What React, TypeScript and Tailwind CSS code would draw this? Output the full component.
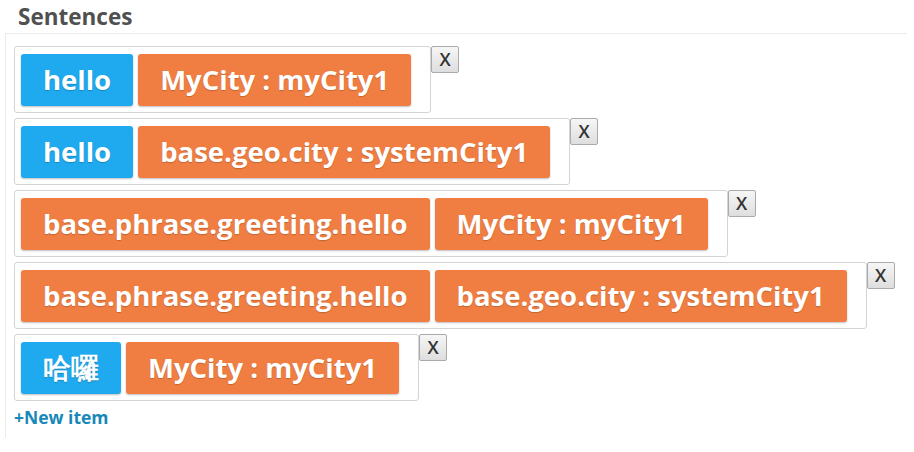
import React from 'react';

type Part = { text: string; kind: 'word' | 'slot' };

const sentences: Part[][] = [
  [
    { text: 'hello', kind: 'word' },
    { text: 'MyCity : myCity1', kind: 'slot' },
  ],
  [
    { text: 'hello', kind: 'word' },
    { text: 'base.geo.city : systemCity1', kind: 'slot' },
  ],
  [
    { text: 'base.phrase.greeting.hello', kind: 'slot' },
    { text: 'MyCity : myCity1', kind: 'slot' },
  ],
  [
    { text: 'base.phrase.greeting.hello', kind: 'slot' },
    { text: 'base.geo.city : systemCity1', kind: 'slot' },
  ],
  [
    { text: '哈囉', kind: 'word' },
    { text: 'MyCity : myCity1', kind: 'slot' },
  ],
];

function Chip(props: { part: Part }) {
  const color = props.part.kind === 'word' ? 'bg-[#1fa9ee]' : 'bg-[#f07e42]';
  return (
    <span
      className={`${color} mr-[5px] flex h-[52px] items-center rounded-[3px] px-[22px] text-[27.5px] font-bold text-white shadow-[0_1px_2px_rgba(0,0,0,0.25)] [text-shadow:0_1px_1px_rgba(0,0,0,0.2)]`}
    >
      {props.part.text}
    </span>
  );
}

function SentenceRow(props: { parts: Part[] }) {
  return (
    <div className="flex items-start">
      <div className="flex rounded-[3px] border border-[#d4d4d4] pt-[7px] pr-[14px] pb-[6px] pl-[6px]">
        {props.parts.map((part, i) => (
          <Chip key={i} part={part} />
        ))}
      </div>
      <button className="flex h-[27px] w-[28px] items-center justify-center rounded-[2px] border border-[#aaaaaa] bg-gradient-to-b from-[#f6f6f6] to-[#dedede] pb-[1px] text-[18px] font-semibold text-[#333]">
        X
      </button>
    </div>
  );
}

export default function App() {
  return (
    <div className="h-[452px] w-[914px] bg-white font-['Open_Sans',sans-serif]">
      <h2 className="pt-[3px] pl-[18px] text-[22.5px] leading-[27px] font-bold text-[#505050]">Sentences</h2>
      <div className="mt-[3px] mr-[7px] ml-[5px] h-[405px] border-t border-l border-[#ececec] pt-[12px] pl-[8px]">
        <div className="flex flex-col gap-[5px]">
          {sentences.map((parts, i) => (
            <SentenceRow key={i} parts={parts} />
          ))}
        </div>
        <div className="mt-[5px] text-[17.5px] leading-[22px] font-bold text-[#1888b8]">+New item</div>
      </div>
    </div>
  );
}
